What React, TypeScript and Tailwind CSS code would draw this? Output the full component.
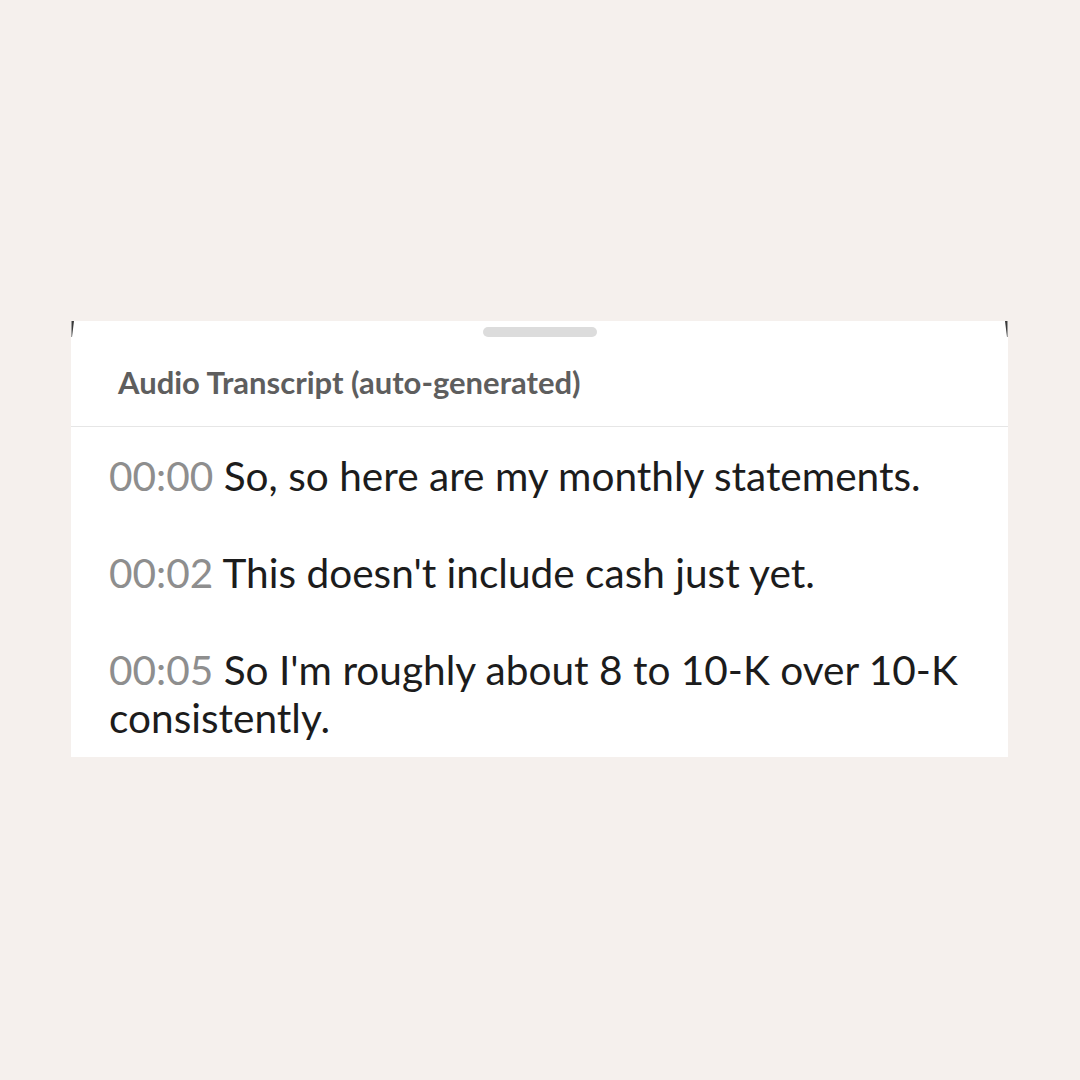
import React from "react";

export default function App() {
  const rows = [
    { t: "00:00", s: "So, so here are my monthly statements." },
    { t: "00:02", s: "This doesn't include cash just yet." },
    { t: "00:05", s: "So I'm roughly about 8 to 10-K over 10-K consistently." },
  ];
  return (
    <div
      className="w-[1080px] h-[1080px] bg-[#f5f0ed] overflow-hidden"
      style={{ fontFamily: "Lato, 'Noto Sans', sans-serif" }}
    >
      <div className="relative mt-[321px] ml-[71px] w-[937px] bg-white">
        <svg className="absolute left-0 top-0" width="4" height="16" viewBox="0 0 4 16">
          <polygon points="0.5,0 3,0 1,16 0.5,16" fill="#3a3a3a" />
        </svg>
        <svg className="absolute right-0 top-0" width="4" height="16" viewBox="0 0 4 16">
          <polygon points="1,0 3.5,0 3.5,16 3,16" fill="#3a3a3a" />
        </svg>
        <div className="h-[106px] border-b border-[#e6e6e6] flex flex-col">
          <div className="flex justify-center pt-[6px]">
            <div className="w-[114px] h-[10px] rounded-full bg-[#dcdcdc]" />
          </div>
          <div className="pl-[47px] pt-[27px] text-[31px] leading-[36px] font-bold text-[#5e5e5e]">
            Audio Transcript (auto-generated)
          </div>
        </div>
        <div className="pl-[38px] pr-[30px] pt-[25px] pb-[15px] flex flex-col gap-[49px]">
          {rows.map((r) => (
            <p key={r.t} className="text-[40.6px] leading-[48px] text-[#1c1c1c]">
              <span className="text-[#8e8e8e]">{r.t}</span> {r.s}
            </p>
          ))}
        </div>
      </div>
    </div>
  );
}
